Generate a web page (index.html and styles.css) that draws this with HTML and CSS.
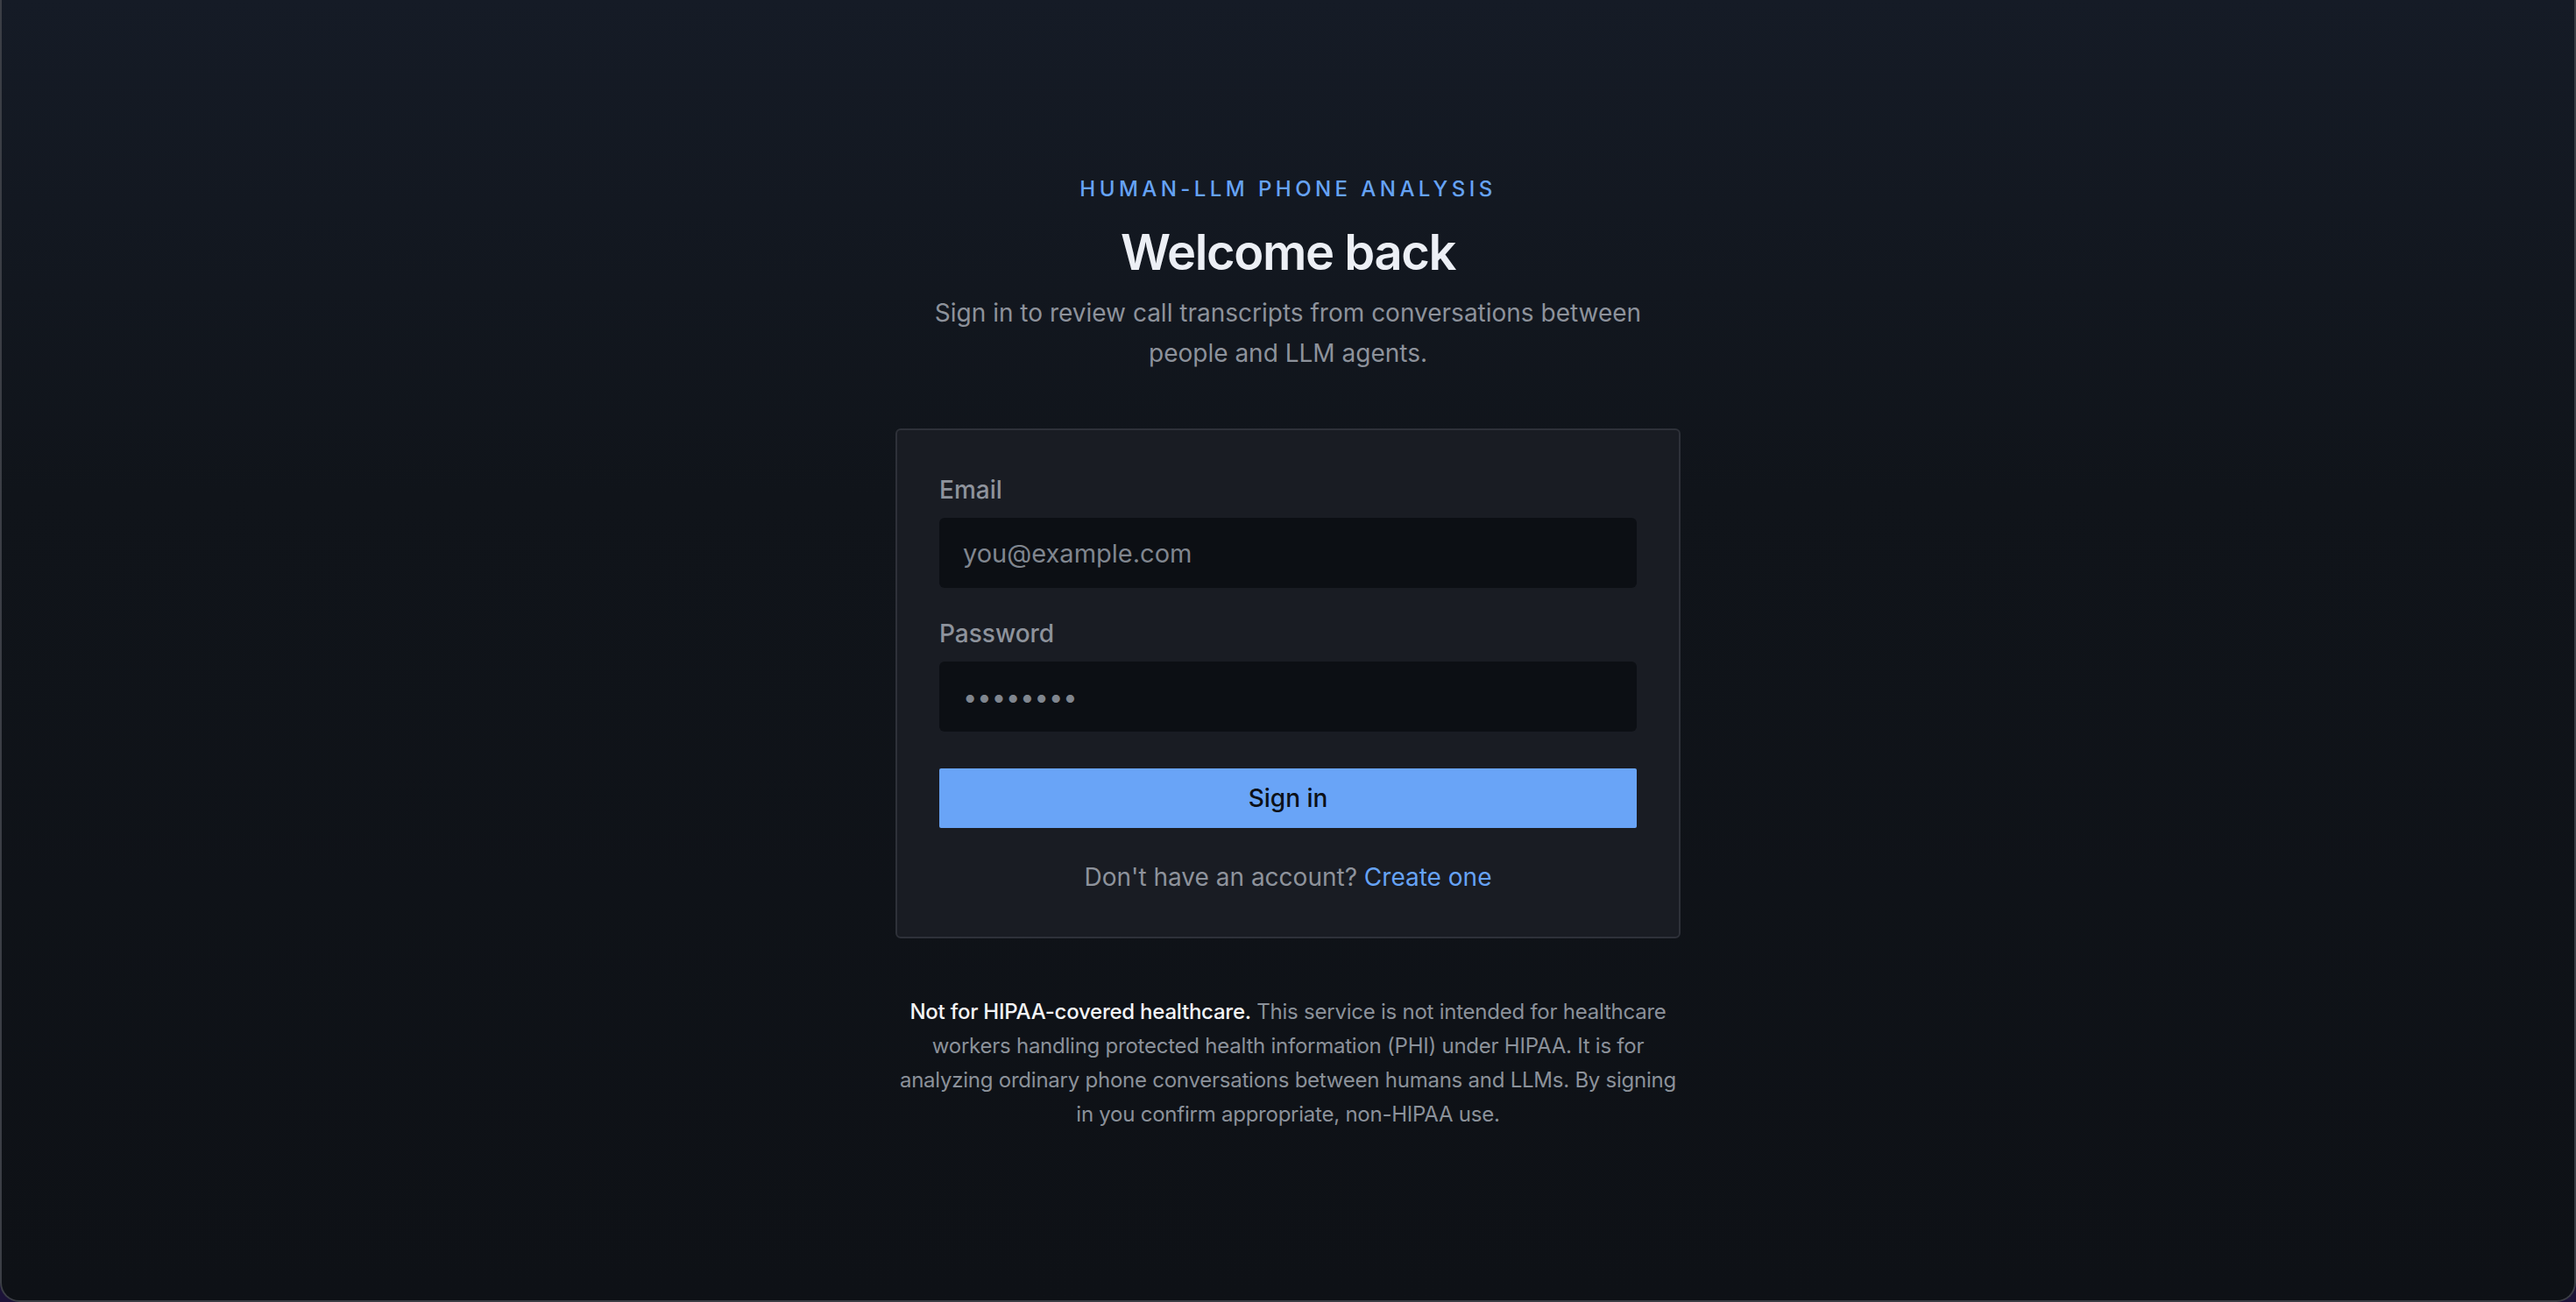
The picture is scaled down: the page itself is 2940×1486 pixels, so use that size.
FILE: index.html
```html
<!DOCTYPE html>
<html lang="en">
<head>
    <meta charset="UTF-8">
    <meta name="viewport" content="width=device-width, initial-scale=1.0">
    <title>Sign in - Human-LLM Phone Analysis</title>
    <link rel="stylesheet" href="styles.css">
</head>
<body>
    <div class="window">
        <main class="auth">
            <p class="eyebrow">Human-LLM Phone Analysis</p>
            <h1>Welcome back</h1>
            <p class="intro">Sign in to review call transcripts from conversations between people and LLM agents.</p>

            <form class="card" onsubmit="return false;">
                <div class="field">
                    <label for="email">Email</label>
                    <input type="email" id="email" placeholder="you@example.com">
                </div>
                <div class="field">
                    <label for="password">Password</label>
                    <input type="password" id="password" placeholder="&bull;&bull;&bull;&bull;&bull;&bull;&bull;&bull;">
                </div>
                <button type="submit">Sign in</button>
                <p class="switch-link">Don't have an account? <a href="#">Create one</a></p>
            </form>

            <p class="notice"><strong>Not for HIPAA-covered healthcare.</strong> This service is not intended for healthcare workers handling protected health information (PHI) under HIPAA. It is for analyzing ordinary phone conversations between humans and LLMs. By signing in you confirm appropriate, non-HIPAA use.</p>
        </main>
    </div>
</body>
</html>
```

FILE: styles.css
```css
html, body {
    height: 100%;
}
body {
    margin: 0;
    background-color: #1c1338;
    font-family: Inter, "Noto Sans", Arial, sans-serif;
    color: #e5e7eb;
}
.window {
    box-sizing: border-box;
    height: 100%;
    border: 2px solid #3b3e45;
    border-top: none;
    border-radius: 0 0 22px 22px;
    background: linear-gradient(to bottom, #151b26 0%, #10141a 38%, #0e1116 100%);
    overflow: hidden;
}
.auth {
    width: 896px;
    margin: 0 auto;
    padding-top: 200px;
    text-align: center;
}
.eyebrow {
    margin: 0;
    font-size: 24px;
    line-height: 32px;
    font-weight: 500;
    letter-spacing: 0.185em;
    text-transform: uppercase;
    color: #66a3f6;
}
h1 {
    margin: 22px 0 0;
    font-size: 56px;
    line-height: 68px;
    font-weight: 600;
    letter-spacing: -0.025em;
    color: #eceff5;
}
.intro {
    max-width: 860px;
    margin: 12px auto 0;
    font-size: 28px;
    line-height: 46px;
    color: #8d929b;
}
.card {
    margin-top: 63px;
    padding: 48px;
    background-color: #191c23;
    border: 2px solid #2e3139;
    border-radius: 6px;
    text-align: left;
}
.field + .field {
    margin-top: 32px;
}
label {
    display: block;
    margin-bottom: 12px;
    font-size: 28px;
    line-height: 40px;
    font-weight: 500;
    color: #8e939c;
}
input {
    display: block;
    box-sizing: border-box;
    width: 100%;
    height: 80px;
    padding: 0 27px;
    background-color: #0c0f14;
    border: none;
    border-radius: 6px;
    font-family: inherit;
    font-size: 29px;
    color: #e5e7eb;
    outline: none;
}
input::placeholder {
    color: #80868f;
}
button {
    display: block;
    width: 100%;
    height: 68px;
    margin-top: 42px;
    background-color: #69a4f7;
    border: none;
    border-radius: 2px;
    font-family: inherit;
    font-size: 28px;
    font-weight: 500;
    color: #0c1018;
    cursor: pointer;
}
.switch-link {
    margin: 36px 0 0;
    text-align: center;
    font-size: 28px;
    line-height: 40px;
    color: #8e939c;
}
.switch-link a {
    color: #66a3f6;
    text-decoration: none;
}
.notice {
    margin: 64px 0 0;
    font-size: 24px;
    line-height: 39px;
    letter-spacing: -0.01em;
    color: #8b919a;
}
.notice strong {
    font-weight: 500;
    color: #f3f4f6;
}
```
